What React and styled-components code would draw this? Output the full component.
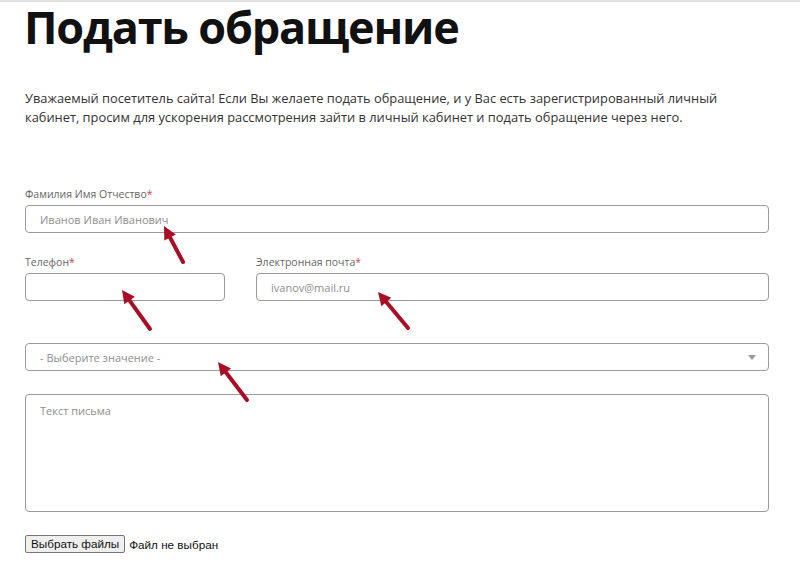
import React from "react";
import styled, { createGlobalStyle } from "styled-components";

const Global = createGlobalStyle`
  html, body { margin: 0; padding: 0; background: #fff; }
  body { font-family: "Open Sans", "DejaVu Sans", sans-serif; }
  * { box-sizing: border-box; }
`;

const Page = styled.div`
  position: relative;
  width: 800px;
  height: 564px;
  overflow: hidden;
  border-top: 2px solid #e2e2e2;
`;

const Content = styled.div`
  width: 744px;
  margin-left: 25px;
  display: flex;
  flex-direction: column;
`;

const Title = styled.h1`
  margin: 0 0 0 -1px;
  font-family: "Open Sans", sans-serif;
  font-weight: 700;
  font-size: 45px;
  line-height: 50px;
  color: #111;
  letter-spacing: -1.2px;
`;

const Intro = styled.p`
  margin: 37px 0 0 0;
  font-size: 12.85px;
  line-height: 19px;
  color: #333;
`;

const Form = styled.div`
  margin-top: 60px;
  display: flex;
  flex-direction: column;
`;

const Row = styled.div`
  display: flex;
  gap: 31px;
  margin-top: ${(p) => p.$mt || 0}px;
`;

const Field = styled.div`
  display: flex;
  flex-direction: column;
  width: ${(p) => (p.$w ? p.$w + "px" : "auto")};
  flex: ${(p) => (p.$w ? "none" : "1")};
`;

const Label = styled.label`
  font-size: 10.5px;
  line-height: 14px;
  color: #666;
  margin-bottom: 4px;
`;

const Req = styled.span`
  color: #d0453f;
`;

const Box = styled.div`
  height: ${(p) => p.$h || 28}px;
  border: 1px solid #9a9a9a;
  border-radius: 4px;
  padding: ${(p) => (p.$area ? "8px 14px" : "0 14px")};
  display: flex;
  align-items: ${(p) => (p.$area ? "flex-start" : "center")};
  justify-content: space-between;
  font-size: 11px;
  color: #8e8e8e;
  background: #fff;
`;

const Caret = styled.span`
  width: 0;
  height: 0;
  border-left: 4px solid transparent;
  border-right: 4px solid transparent;
  border-top: 5px solid #999;
  margin-right: -2px;
`;

const FileRow = styled.div`
  margin-top: 23px;
  display: flex;
  align-items: center;
  gap: 4px;
  font-family: "Liberation Sans", Arial, sans-serif;
  font-size: 11.7px;
  color: #111;
`;

const FileButton = styled.button`
  height: 18px;
  padding: 0 5px;
  font-family: "Liberation Sans", Arial, sans-serif;
  font-size: 11.7px;
  color: #111;
  background: #efefef;
  border: 1px solid #767676;
  border-radius: 2px;
  line-height: 16px;
`;

const Overlay = styled.svg`
  position: absolute;
  left: 0;
  top: -2px;
  pointer-events: none;
`;

const arrows = [
  [183, 262, 164, 226],
  [150, 329, 122, 290],
  [408, 328, 378, 292],
  [247, 400, 218, 362],
];

function Arrow({ x1, y1, x2, y2 }) {
  const dx = x2 - x1;
  const dy = y2 - y1;
  const len = Math.hypot(dx, dy);
  const ux = dx / len;
  const uy = dy / len;
  const hl = 13;
  const hw = 6.5;
  const bx = x2 - ux * hl;
  const by = y2 - uy * hl;
  const px = -uy;
  const py = ux;
  return (
    <g>
      <line x1={x1} y1={y1} x2={bx + ux * 2} y2={by + uy * 2} stroke="#a80f27" strokeWidth="4" strokeLinecap="round" />
      <polygon
        points={`${x2},${y2} ${bx + px * hw},${by + py * hw} ${bx - px * hw},${by - py * hw}`}
        fill="#a80f27"
      />
    </g>
  );
}

export default function App() {
  return (
    <>
      <Global />
      <Page>
        <Content>
          <Title>Подать обращение</Title>
          <Intro>
            Уважаемый посетитель сайта! Если Вы желаете подать обращение, и у Вас есть зарегистрированный личный
            <br />
            кабинет, просим для ускорения рассмотрения зайти в личный кабинет и подать обращение через него.
          </Intro>
          <Form>
            <Field>
              <Label>
                Фамилия Имя Отчество<Req>*</Req>
              </Label>
              <Box>Иванов Иван Иванович</Box>
            </Field>
            <Row $mt={22}>
              <Field $w={200}>
                <Label>
                  Телефон<Req>*</Req>
                </Label>
                <Box />
              </Field>
              <Field>
                <Label>
                  Электронная почта<Req>*</Req>
                </Label>
                <Box>ivanov@mail.ru</Box>
              </Field>
            </Row>
            <Row $mt={42}>
              <Field>
                <Box>
                  - Выберите значение -<Caret />
                </Box>
              </Field>
            </Row>
            <Row $mt={23}>
              <Field>
                <Box $h={118} $area>
                  Текст письма
                </Box>
              </Field>
            </Row>
          </Form>
          <FileRow>
            <FileButton>Выбрать файлы</FileButton>
            <span>Файл не выбран</span>
          </FileRow>
        </Content>
        <Overlay width="800" height="564" viewBox="0 0 800 564">
          {arrows.map(([x1, y1, x2, y2], i) => (
            <Arrow key={i} x1={x1} y1={y1} x2={x2} y2={y2} />
          ))}
        </Overlay>
      </Page>
    </>
  );
}
